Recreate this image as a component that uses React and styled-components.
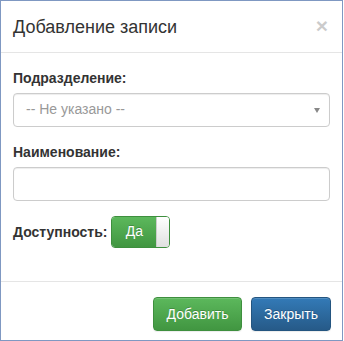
import React from "react";
import styled, { createGlobalStyle } from "styled-components";

const Global = createGlobalStyle`
  html, body { margin: 0; padding: 0; background: #fff; }
  body { font-family: "Liberation Sans", Arial, sans-serif; font-size: 14px; line-height: 1.42857; color: #333; }
  * { box-sizing: border-box; }
`;

const Modal = styled.div`
  width: 343px;
  height: 341px;
  border: 1px solid #7f98c2;
  background: #fff;
  display: flex;
  flex-direction: column;
`;

const Header = styled.div`
  padding: 15px 12px 15px 12px;
  height: 52px;
  border-bottom: 1px solid #e5e5e5;
  display: flex;
  align-items: center;
  justify-content: space-between;
`;

const Title = styled.h4`
  margin: 0;
  font-size: 18px;
  font-weight: 400;
  line-height: 20px;
  color: #333;
`;

const Close = styled.span`
  font-size: 21px;
  font-weight: 700;
  line-height: 1;
  color: #000;
  opacity: 0.2;
  margin-right: 2px;
  margin-top: -3px;
`;

const Body = styled.div`
  padding: 15px 12px 15px 12px;
  flex: 1;
`;

const Group = styled.div`
  margin-bottom: 15px;
  display: ${(p) => (p.$inline ? "flex" : "block")};
  align-items: center;
  gap: 4px;
`;

const Label = styled.label`
  display: block;
  font-weight: 700;
  margin-bottom: ${(p) => (p.$inline ? "0" : "5px")};
  line-height: 20px;
`;

const Control = styled.div`
  height: 34px;
  width: 100%;
  border: 1px solid #ccc;
  border-radius: 4px;
  box-shadow: inset 0 1px 1px rgba(0, 0, 0, 0.075);
  padding: 6px 12px;
  display: flex;
  align-items: center;
  justify-content: space-between;
  color: ${(p) => (p.$placeholder ? "#999" : "#555")};
`;

const Caret = styled.span`
  width: 0;
  height: 0;
  border-left: 3.5px solid transparent;
  border-right: 3.5px solid transparent;
  border-top: 5px solid #888;
  margin-right: -3px;
`;

const Switch = styled.div`
  width: 59px;
  height: 32px;
  border: 1px solid #3e8f3e;
  border-radius: 4px;
  overflow: hidden;
  display: flex;
`;

const SwitchOn = styled.div`
  flex: 1;
  background: linear-gradient(to bottom, #5cb85c 0%, #419641 100%);
  color: #fff;
  display: flex;
  align-items: center;
  justify-content: center;
  font-size: 14px;
  text-shadow: 0 -1px 0 rgba(0, 0, 0, 0.2);
`;

const Knob = styled.div`
  width: 13px;
  background: linear-gradient(to bottom, #fff 0%, #e0e0e0 100%);
  border-left: 1px solid #ccc;
`;

const Footer = styled.div`
  border-top: 1px solid #e5e5e5;
  padding: 15px 11px 9px 12px;
  display: flex;
  justify-content: flex-end;
  gap: 9px;
`;

const Button = styled.button`
  height: 34px;
  padding: 6px 12px;
  font-family: inherit;
  font-size: 14px;
  line-height: 20px;
  border-radius: 4px;
  color: #fff;
  text-shadow: 0 -1px 0 rgba(0, 0, 0, 0.2);
  box-shadow: inset 0 1px 0 rgba(255, 255, 255, 0.15), 0 1px 1px rgba(0, 0, 0, 0.075);
  border: 1px solid ${(p) => (p.$variant === "success" ? "#3e8f3e" : "#245580")};
  background: ${(p) =>
    p.$variant === "success"
      ? "linear-gradient(to bottom, #5cb85c 0%, #419641 100%)"
      : "linear-gradient(to bottom, #337ab7 0%, #265a88 100%)"};
  width: ${(p) => p.$w}px;
`;

export default function App() {
  return (
    <>
      <Global />
      <Modal>
        <Header>
          <Title>Добавление записи</Title>
          <Close>×</Close>
        </Header>
        <Body>
          <Group>
            <Label>Подразделение:</Label>
            <Control $placeholder>
              <span>-- Не указано --</span>
              <Caret />
            </Control>
          </Group>
          <Group>
            <Label>Наименование:</Label>
            <Control />
          </Group>
          <Group $inline>
            <Label $inline>Доступность:</Label>
            <Switch>
              <SwitchOn>Да</SwitchOn>
              <Knob />
            </Switch>
          </Group>
        </Body>
        <Footer>
          <Button $variant="success" $w={89}>Добавить</Button>
          <Button $variant="primary" $w={80}>Закрыть</Button>
        </Footer>
      </Modal>
    </>
  );
}
